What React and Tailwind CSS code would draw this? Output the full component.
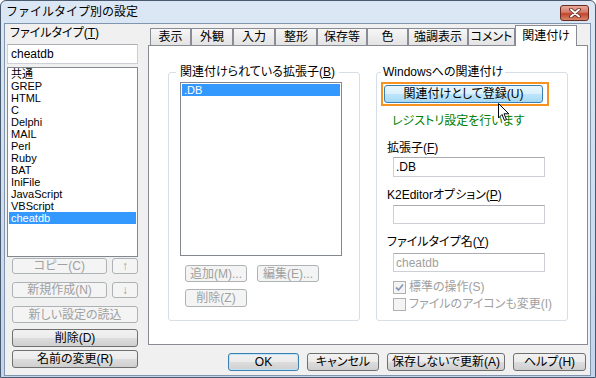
import React from "react";

const btnOn =
  "border-[#707070] text-black bg-[linear-gradient(to_bottom,#f2f2f2_0%,#ebebeb_50%,#dddddd_50%,#cfcfcf_100%)]";
const btnOff = "border-[#adb2b5] text-[#a0a0a0] bg-[#f4f4f4]";

function Btn({ children, disabled, className = "" }) {
  return (
    <div
      className={`flex items-center justify-center rounded-[3px] border text-[12px] leading-none ${
        disabled ? btnOff : btnOn
      } ${className}`}
    >
      {children}
    </div>
  );
}

function Field({ value = "", disabled, className = "" }) {
  return (
    <div
      className={`flex items-center border border-[#ccd0d6] border-t-[#abadb3] bg-white pl-[2px] text-[12px] leading-none ${
        disabled ? "text-[#a0a0a0]" : "text-black"
      } ${className}`}
    >
      {value}
    </div>
  );
}

function Check({ checked, label }) {
  return (
    <div className="flex items-center ml-[12px] h-[14px] text-[12px] leading-[14px] text-[#a0a0a0]">
      <div className="w-[13px] h-[13px] border border-[#b1b1b1] bg-[#f4f4f4] flex items-center justify-center mr-[3px]">
        {checked && (
          <svg width="9" height="9" viewBox="0 0 9 9">
            <path d="M1 4.5 L3.5 7 L8 1.5" fill="none" stroke="#8a99b8" strokeWidth="1.8" />
          </svg>
        )}
      </div>
      {label}
    </div>
  );
}

const types = [
  "共通",
  "GREP",
  "HTML",
  "C",
  "Delphi",
  "MAIL",
  "Perl",
  "Ruby",
  "BAT",
  "IniFile",
  "JavaScript",
  "VBScript",
  "cheatdb",
];

const tabs = [
  { label: "表示", w: 41 },
  { label: "外観", w: 42 },
  { label: "入力", w: 42 },
  { label: "整形", w: 42 },
  { label: "保存等", w: 50 },
  { label: "色", w: 41 },
  { label: "強調表示", w: 60 },
  { label: "コメント", w: 47 },
  { label: "関連付け", w: 62, active: true },
];

export default function App() {
  return (
    <div className="relative w-[596px] h-[378px] flex flex-col rounded-t-[6px] border border-[#4a5b70] bg-[linear-gradient(to_bottom,#dbe7f4,#c2d5ec)] font-['Liberation_Sans','Noto_Sans_CJK_JP',sans-serif] text-black overflow-hidden">
      {/* Title bar */}
      <div className="h-[22px] flex items-center justify-between pl-[5px] pr-[6px] shrink-0">
        <span className="text-[12px] leading-none">ファイルタイプ別の設定</span>
        <div className="w-[29px] h-[16px] mt-[2px] rounded-[3px] border border-[#6b2a1f] bg-[linear-gradient(to_bottom,#e8a99c_0%,#d47a68_45%,#c0442b_55%,#d9876a_100%)] flex items-center justify-center">
          <svg width="12" height="10" viewBox="0 0 12 10">
            <path d="M2 1.5 L10 8.5 M10 1.5 L2 8.5" stroke="#5a1f16" strokeWidth="3.6" strokeLinecap="round" />
            <path d="M2 1.5 L10 8.5 M10 1.5 L2 8.5" stroke="#ffffff" strokeWidth="2" strokeLinecap="round" />
          </svg>
        </div>
      </div>

      {/* Client area */}
      <div className="flex-1 ml-[3px] mr-[4px] mb-[1px] border border-[#8196ae] bg-[#f0f0f0] flex pl-[2px] [font-feature-settings:'palt']">
        {/* Left column */}
        <div className="w-[131px] flex flex-col pt-[2px]">
          <div className="text-[12px] leading-[14px] pl-[3px]">
            ファイルタイプ(<span className="underline">T</span>)
          </div>
          <Field value="cheatdb" className="mt-[4px] h-[20px] pl-[3px]" />
          <div className="mt-[3px] h-[190px] border border-[#828790] bg-white">
            {types.map((t) => (
              <div
                key={t}
                className={`h-[12px] mx-px pl-[2px] text-[11px] leading-[12px] ${
                  t === "cheatdb" ? "bg-[#3399ff] text-white" : ""
                }`}
              >
                {t}
              </div>
            ))}
          </div>
          <div className="ml-[5px] w-[126px] flex flex-col">
            <div className="mt-[1px] flex gap-[5px]">
              <Btn disabled className="w-[95px] h-[16px]">コピー(C)</Btn>
              <Btn disabled className="w-[26px] h-[16px]">↑</Btn>
            </div>
            <div className="mt-[8px] flex gap-[5px]">
              <Btn disabled className="w-[95px] h-[16px]">新規作成(N)</Btn>
              <Btn disabled className="w-[26px] h-[16px]">↓</Btn>
            </div>
            <Btn disabled className="mt-[8px] h-[17px]">新しい設定の読込</Btn>
            <Btn className="mt-[6px] h-[18px]">削除(D)</Btn>
            <Btn className="mt-[3px] h-[18px]">名前の変更(R)</Btn>
          </div>
        </div>

        {/* Right column */}
        <div className="ml-[10px] mt-px w-[440px] flex flex-col">
          <div className="relative z-10 flex items-end h-[21px] pl-[2px]">
            {tabs.map((t) =>
              t.active ? (
                <div
                  key={t.label}
                  style={{ width: t.w }}
                  className="h-[21px] border border-b-0 border-[#898c95] bg-white flex items-start justify-center pt-[3px] text-[12px] leading-[14px]"
                >
                  {t.label}
                </div>
              ) : (
                <div
                  key={t.label}
                  style={{ width: t.w }}
                  className="h-[17px] mb-px border border-b-0 border-[#898c95] bg-[linear-gradient(to_bottom,#f7f7f7,#e3e3e3)] flex items-center justify-center text-[12px] leading-none"
                >
                  {t.label}
                </div>
              )
            )}
          </div>
          <div className="-mt-px h-[300px] border border-[#898c95] bg-white">
            <div className="flex mt-[19px] ml-[19px] gap-[16px]">
              {/* Group 1 */}
              <fieldset className="w-[192px] h-[256px] rounded-[3px] border border-[#d5dfe5]">
                <legend className="ml-[7px] px-[4px] text-[12px] leading-[14px]">
                  関連付けられている拡張子(<span className="underline">B</span>)
                </legend>
                <div className="pt-[3px] pl-[11px] flex flex-col">
                  <div className="w-[162px] h-[174px] border border-[#828790] bg-white">
                    <div className="h-[12px] mx-px mt-px bg-[#3399ff] text-white pl-[2px] text-[11px] leading-[12px]">
                      .DB
                    </div>
                  </div>
                  <div className="ml-[5px] mt-[9px] flex gap-[10px]">
                    <Btn disabled className="w-[62px] h-[17px]">追加(M)...</Btn>
                    <Btn disabled className="w-[62px] h-[17px]">編集(E)...</Btn>
                  </div>
                  <Btn disabled className="ml-[5px] mt-[7px] w-[62px] h-[18px]">削除(Z)</Btn>
                </div>
              </fieldset>

              {/* Group 2 */}
              <fieldset className="w-[192px] h-[256px] rounded-[3px] border border-[#d5dfe5]">
                <legend className="ml-[4px] px-[2px] text-[12px] leading-[14px]">
                  Windowsへの関連付け
                </legend>
                <div className="pt-[3px] pl-[4px] flex flex-col">
                  <div className="w-[168px] h-[24px] border-2 border-[#f7921e] pl-px pr-[4px] py-px">
                    <div className="h-full rounded-[3px] border border-[#3c7fb1] bg-[linear-gradient(to_bottom,#eaf6fd_0%,#d9f0fc_50%,#bee6fd_50%,#a7d9f5_100%)] flex items-center justify-center text-[12px] leading-none">
                      関連付けとして登録(U)
                    </div>
                  </div>
                  <div className="ml-[11px] mt-[8px] text-[12px] leading-[14px] text-[#008000]">
                    レジストリ設定を行います
                  </div>
                  <div className="ml-[6px] mt-[13px] text-[12px] leading-[14px]">
                    拡張子(<span className="underline">F</span>)
                  </div>
                  <Field value=".DB" className="ml-[12px] mt-[2px] w-[152px] h-[20px]" />
                  <div className="ml-[6px] mt-[11px] text-[12px] leading-[14px]">
                    K2Editorオプション(<span className="underline">P</span>)
                  </div>
                  <Field className="ml-[12px] mt-[3px] w-[152px] h-[19px]" />
                  <div className="ml-[6px] mt-[11px] text-[12px] leading-[14px]">
                    ファイルタイプ名(<span className="underline">Y</span>)
                  </div>
                  <Field value="cheatdb" disabled className="ml-[12px] mt-[4px] w-[152px] h-[19px]" />
                  <div className="mt-[8px]">
                    <Check checked label="標準の操作(S)" />
                  </div>
                  <div className="mt-[3px]">
                    <Check label="ファイルのアイコンも変更(I)" />
                  </div>
                </div>
              </fieldset>
            </div>
          </div>

          {/* Dialog buttons */}
          <div className="mt-[8px] pr-[2px] flex justify-end gap-[8px]">
            <Btn className="w-[71px] h-[18px] !border-[#3c7fb1] shadow-[inset_0_0_0_1px_#bfe3f7]">OK</Btn>
            <Btn className="w-[72px] h-[18px]">キャンセル</Btn>
            <Btn className="w-[118px] h-[18px]">保存しないで更新(A)</Btn>
            <Btn className="w-[73px] h-[18px]">ヘルプ(H)</Btn>
          </div>
        </div>
      </div>

      {/* Mouse pointer */}
      <svg className="absolute left-[497px] top-[102px]" width="12" height="19" viewBox="0 0 12 19">
        <path d="M0.5 0.5 L0.5 15 L4 11.5 L6.5 17.5 L8.5 16.5 L6 10.8 L10.8 10.8 Z" fill="#ffffff" stroke="#000000" strokeWidth="1" />
      </svg>
    </div>
  );
}
